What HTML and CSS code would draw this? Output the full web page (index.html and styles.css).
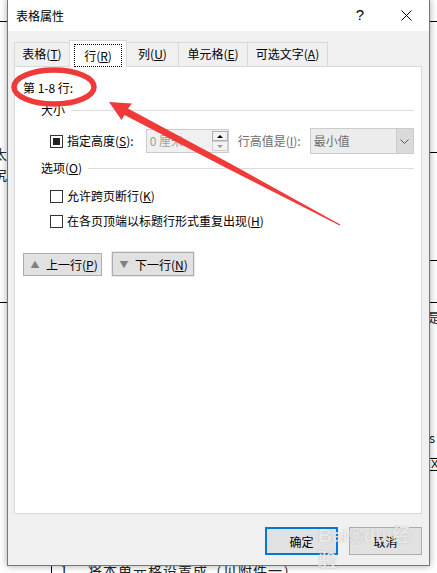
FILE: index.html
```html
<!DOCTYPE html>
<html lang="zh-CN">
<head>
    <meta charset="UTF-8">
    <meta name="viewport" content="width=device-width, initial-scale=1.0">
    <title>表格属性</title>
    <link rel="stylesheet" href="styles.css">
</head>
<body>
    <!-- document behind the dialog -->
    <div class="doc">
        <div class="doc-rule rule-l1"></div>
        <div class="doc-rule rule-l2"></div>
        <div class="doc-rule rule-r1"></div>
        <div class="doc-rule rule-r2"></div>
        <div class="doc-rule rule-r3"></div>
        <div class="doc-rule rule-r4"></div>
        <div class="doc-vline"></div>
        <span class="doc-text text-l1">太</span>
        <span class="doc-text text-l2">尻</span>
        <span class="doc-text text-r1">是</span>
        <span class="doc-text text-r2">s•</span>
        <span class="doc-box">X</span>
        <span class="doc-text text-bottom">1、 将本单元格设置成（见附件一）。</span>
    </div>

    <div class="dialog">
        <div class="titlebar">
            <span class="title">表格属性</span>
            <span class="title-btn help">?</span>
            <span class="title-btn close">
                <svg width="11" height="11" viewBox="0 0 11 11"><path d="M0.5 0.5L10.5 10.5M10.5 0.5L0.5 10.5" stroke="#000" stroke-width="1"/></svg>
            </span>
        </div>

        <div class="dialog-body">
            <div class="tabs">
                <div class="tab tab-table">表格(<u>T</u>)</div>
                <div class="tab tab-row active"><span class="focus">行(<u>R</u>)</span></div>
                <div class="tab tab-col">列(<u>U</u>)</div>
                <div class="tab tab-cell">单元格(<u>E</u>)</div>
                <div class="tab tab-alt">可选文字(<u>A</u>)</div>
            </div>

            <div class="panel">
                <div class="rows-label">第 1-8 行:</div>

                <div class="group-head"><span>大小</span></div>
                <div class="size-row">
                    <span class="checkbox mixed"></span>
                    <span class="size-label">指定高度(<u>S</u>):</span>
                    <span class="spin">
                        <span class="spin-value">0 厘米</span>
                        <span class="spin-btns">
                            <span class="spin-btn up"></span>
                            <span class="spin-btn down"></span>
                        </span>
                    </span>
                    <span class="size-label muted">行高值是(<u>I</u>):</span>
                    <span class="select">
                        <span class="select-value">最小值</span>
                        <span class="select-arrow">
                            <svg width="9" height="5" viewBox="0 0 9 5"><path d="M0.5 0.5L4.5 4.5L8.5 0.5" fill="none" stroke="#555" stroke-width="1"/></svg>
                        </span>
                    </span>
                </div>

                <div class="group-head"><span>选项(<u>O</u>)</span></div>
                <div class="check-row first"><span class="checkbox"></span>允许跨页断行(<u>K</u>)</div>
                <div class="check-row"><span class="checkbox"></span>在各页顶端以标题行形式重复出现(<u>H</u>)</div>

                <div class="nav-row">
                    <button class="nav-btn prev"><span class="tri">▲</span>上一行(<u>P</u>)</button>
                    <button class="nav-btn next"><span class="tri">▼</span>下一行(<u>N</u>)</button>
                </div>
            </div>

            <div class="footer">
                <button class="btn btn-default">确定</button>
                <button class="btn">取消</button>
            </div>
        </div>
    </div>

    <div class="watermark">
        <span class="wm-logo">Bai<span class="wm-paw">❀</span>du 经验</span>
        <span class="wm-url">jingyan.baidu.com</span>
    </div>

    <!-- red markup drawn over the screenshot -->
    <svg class="markup" width="437" height="573" viewBox="0 0 437 573">
        <ellipse cx="54" cy="87" rx="40" ry="17" fill="none" stroke="#f03a3a" stroke-width="5.5"/>
        <path d="M109 102 L132 103.5 L128 108.5 L226.5 161.5 L340.3 224.5 L339.7 225.5 L223.5 166.5 L124.5 115 L121.5 120 Z" fill="#f03a3a"/>
    </svg>
</body>
</html>
```

FILE: styles.css
```css
* {
    box-sizing: border-box;
}

body {
    margin: 0;
    width: 437px;
    height: 573px;
    overflow: hidden;
    position: relative;
    background: #fff;
    color: #000;
    font-family: "Noto Sans CJK SC", "Noto Sans", sans-serif;
    font-size: 12px;
    line-height: 16px;
}

u {
    text-decoration: underline;
    text-underline-offset: 1px;
}

/* document behind */
.doc {
    position: absolute;
    top: 0;
    left: 0;
    width: 437px;
    height: 573px;
}

.doc-rule {
    position: absolute;
    height: 1px;
    background: #000;
}

.rule-l1 { top: 21px; left: 0; width: 8px; }
.rule-l2 { top: 302px; left: 0; width: 8px; }
.rule-r1 { top: 21px; left: 429px; width: 8px; }
.rule-r2 { top: 152px; left: 429px; width: 8px; }
.rule-r3 { top: 260px; left: 429px; width: 8px; }
.rule-r4 { top: 302px; left: 429px; width: 8px; }

.doc-vline {
    position: absolute;
    left: 51px;
    top: 560px;
    width: 1px;
    height: 20px;
    background: #000;
}

.doc-text {
    position: absolute;
    font-size: 13px;
    color: #222;
}

.text-l1 { left: -6px; top: 146px; }
.text-l2 { left: -6px; top: 167px; }
.text-r1 { left: 428px; top: 309px; }
.text-r2 { left: 429px; top: 430px; }
.text-bottom { left: 60px; top: 562px; font-size: 14px; letter-spacing: 1px; }

.doc-box {
    position: absolute;
    left: 429px;
    top: 458px;
    width: 12px;
    height: 13px;
    border: 1px solid #000;
    font-family: "Liberation Sans", sans-serif;
    font-size: 11px;
    line-height: 11px;
    padding-left: 1px;
}

/* dialog */
.dialog {
    position: relative;
    z-index: 1;
    width: 423px;
    margin: -1px 0 0 7px;
    border: 1px solid #777;
    background: #f0f0f0;
    box-shadow: 0 0 7px rgba(0, 0, 0, 0.35);
}

.titlebar {
    display: flex;
    align-items: center;
    height: 31px;
    padding-left: 8px;
    background: #fff;
}

.title {
    flex: 1;
}

.title-btn {
    display: flex;
    justify-content: center;
    align-items: center;
    width: 46px;
    height: 31px;
}

.help {
    font-family: "Liberation Sans", sans-serif;
    font-size: 15px;
    padding-bottom: 2px;
}

.dialog-body {
    padding: 9px 7px 10px 6px;
}

/* tabs */
.tabs {
    display: flex;
    align-items: flex-end;
    height: 27px;
    margin-bottom: -1px;
}

.tab {
    position: relative;
    height: 24px;
    margin: 0 0 1px -1px;
    border: 1px solid #d9d9d9;
    border-bottom: none;
    background: #f0f0f0;
    text-align: center;
    line-height: 22px;
}

.tab-table { width: 56px; margin-left: 0; }
.tab-row { width: 58px; }
.tab-col { width: 53px; }
.tab-cell { width: 70px; }
.tab-alt { width: 81px; }

.tab.active {
    z-index: 2;
    height: 27px;
    margin-bottom: 0;
    background: #fff;
    padding-top: 3px;
}

.focus {
    display: block;
    width: 48px;
    height: 23px;
    margin-left: 4px;
    border: 1px dotted #000;
    line-height: 21px;
}

/* panel */
.panel {
    position: relative;
    z-index: 1;
    height: 448px;
    border: 1px solid #d9d9d9;
    background: #fff;
    padding: 0 7px 0 8px;
}

.rows-label {
    margin-top: 13px;
}

.group-head {
    display: flex;
    align-items: center;
    height: 16px;
    margin: 6px 0 0 18px;
}

.group-head::after {
    content: "";
    flex: 1;
    height: 1px;
    margin: 0 0 0 6px;
    background: #dcdcdc;
}

.size-row {
    display: flex;
    align-items: center;
    height: 26px;
    margin: 10px 0 0 27px;
}

.checkbox {
    display: flex;
    justify-content: center;
    align-items: center;
    width: 13px;
    height: 13px;
    margin-right: 4px;
    border: 1px solid #333;
    background: #fff;
}

.checkbox.mixed::before {
    content: "";
    width: 7px;
    height: 7px;
    background: #222;
}

.size-label.muted {
    color: #6d6d6d;
    margin-left: 9px;
}

.spin {
    display: flex;
    width: 83px;
    height: 24px;
    margin-left: 12px;
    border: 1px solid #cccccc;
    background: #f0f0f0;
    color: #a0a0a0;
}

.spin-value {
    flex: 1;
    padding: 3px 0 0 3px;
}

.spin-btns {
    display: flex;
    flex-direction: column;
    justify-content: center;
    width: 16px;
    padding: 1px 0;
}

.spin-btn {
    display: flex;
    justify-content: center;
    align-items: center;
    height: 10px;
    border: 1px solid #cfcfcf;
    background: #f3f3f3;
}

.spin-btn.up {
    border-color: #adadad;
}

.spin-btn.up::before {
    content: "";
    border: 3px solid transparent;
    border-top: none;
    border-bottom: 3px solid #000;
}

.spin-btn.down::before {
    content: "";
    border: 3px solid transparent;
    border-bottom: none;
    border-top: 3px solid #9a9a9a;
}

.select {
    display: flex;
    width: 104px;
    height: 26px;
    margin-left: 9px;
    border: 1px solid #cccccc;
    background: #ececec;
    color: #6d6d6d;
}

.select-value {
    flex: 1;
    padding: 4px 0 0 3px;
}

.select-arrow {
    display: flex;
    justify-content: center;
    align-items: center;
    width: 17px;
    border-left: 1px solid #cccccc;
    background: #dadada;
}

.check-row {
    display: flex;
    align-items: center;
    height: 16px;
    margin: 9px 0 0 27px;
}

.check-row.first {
    margin-top: 12px;
}

/* row navigation */
.nav-row {
    display: flex;
    align-items: center;
    gap: 10px;
    height: 24px;
    margin-top: 23px;
}

.nav-btn,
.btn {
    font-family: inherit;
    font-size: 12px;
    color: #000;
    background: #e1e1e1;
    border: 1px solid #adadad;
    padding: 0;
    margin: 0;
}

.nav-btn {
    display: flex;
    align-items: center;
    height: 23px;
    padding-left: 3px;
}

.nav-btn.prev { width: 79px; }
.nav-btn.next {
    width: 82px;
    height: 24px;
    box-shadow: 0 0 0 1px #e8e8e8;
}

.tri {
    width: 16px;
    margin-right: 3px;
    color: #808080;
    font-size: 9px;
    text-align: center;
}

/* footer */
.footer {
    display: flex;
    justify-content: flex-end;
    gap: 11px;
    margin-top: 13px;
}

.btn {
    width: 73px;
    height: 28px;
}

.btn-default {
    border: 2px solid #0078d7;
}

/* watermark */
.watermark {
    position: absolute;
    z-index: 2;
    left: 318px;
    top: 524px;
    width: 95px;
    display: flex;
    flex-direction: column;
    align-items: center;
    color: rgba(255, 255, 255, 0.75);
    text-shadow: 0 0 1px rgba(120, 120, 120, 0.6);
}

.wm-logo {
    font-family: "Liberation Sans", sans-serif;
    font-size: 19px;
    font-weight: bold;
    line-height: 24px;
}

.wm-paw {
    font-size: 16px;
}

.wm-url {
    font-family: "Liberation Sans", sans-serif;
    font-size: 10px;
    line-height: 12px;
}

/* red markup */
.markup {
    position: absolute;
    z-index: 3;
    top: 0;
    left: 0;
    pointer-events: none;
}
```
